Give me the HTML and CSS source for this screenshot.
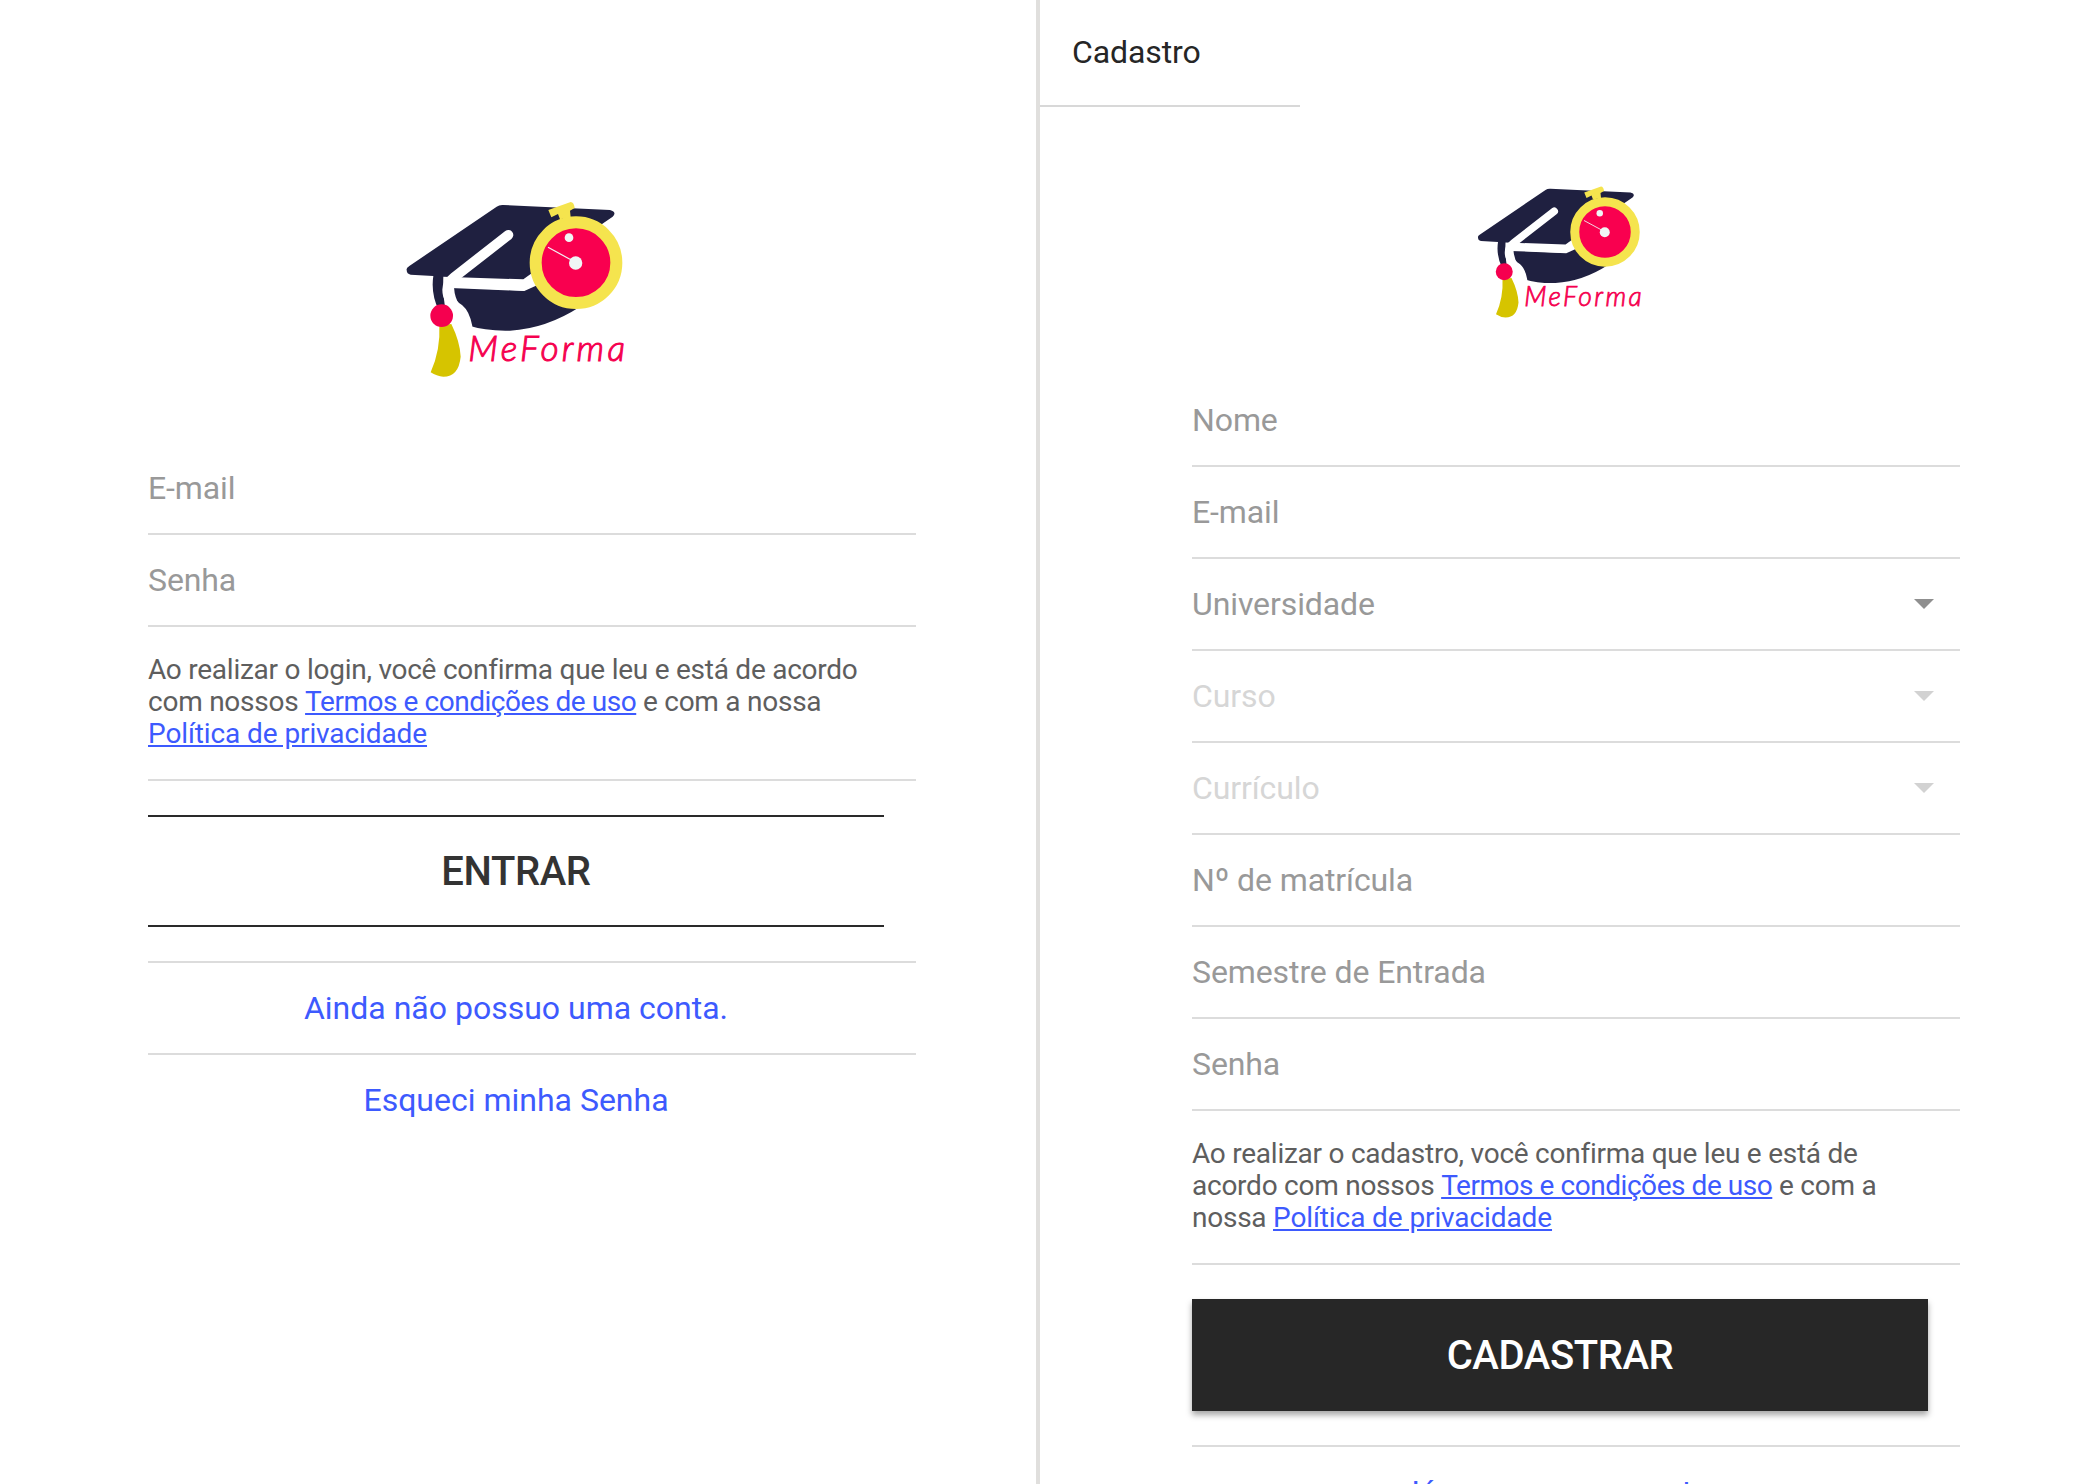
FILE: index.html
```html
<!DOCTYPE html>
<html lang="pt-BR">
<head>
<meta charset="UTF-8">
<title>MeForma</title>
<link rel="stylesheet" href="styles.css">
</head>
<body>

<svg class="defs" width="0" height="0">
  <symbol id="logo" viewBox="0 0 840 660">
    <path fill="#1f2040" d="M80 270 Q78 264 88 258 L350 80 Q358 74 370 75 L690 90 Q712 96 698 110 L560 205 L430 298 L190 290 Q188 340 196 390 L176 390 Q152 340 160 288 L92 284 Q80 282 80 270 Z"/>
    <path fill="#1f2040" d="M222 322 L430 332 L480 305 L600 380 Q500 445 390 452 Q320 454 262 436 Q266 400 240 378 Q224 355 222 322 Z"/>
    <path fill="none" stroke="#fff" stroke-width="30" stroke-linecap="round" stroke-linejoin="round" d="M385 165 L222 292 Q196 312 204 345 Q212 372 238 388 Q255 402 262 440"/>
    <path fill="none" stroke="#fff" stroke-width="30" d="M212 309 L430 318 L480 295"/>
    <path fill="#d6c400" d="M178 436 L214 432 Q240 485 242 530 Q236 590 190 590 Q170 589 152 577 Q182 510 178 436 Z"/>
    <circle cx="185" cy="407" r="34" fill="#f5004f"/>
    <path fill="#f5e44e" d="M505 90 L572 66 Q582 66 584 84 L570 92 L572 112 L540 118 L534 102 L514 112 Z"/>
    <circle cx="588" cy="248" r="121" fill="#f9004f" stroke="#f5e44e" stroke-width="36"/>
    <line x1="504" y1="202" x2="578" y2="242" stroke="#f0f6f6" stroke-width="3.5"/>
    <circle cx="587" cy="249" r="20" fill="#f0f6f6"/>
    <circle cx="567" cy="173" r="13" fill="#f0f6f6"/>
    <text class="logo-text" x="265" y="544" textLength="470" lengthAdjust="spacing">MeForma</text>
  </symbol>
</svg>

<main class="screens">

  <section class="login">
    <svg class="logo logo-big"><use href="#logo"/></svg>
    <div class="field">E-mail</div>
    <div class="field">Senha</div>
    <p class="terms">Ao realizar o login, você confirma que leu e está de acordo com nossos <a class="tight" href="#">Termos e condições de uso</a> e com a nossa <a href="#">Política de privacidade</a></p>
    <button class="btn btn-outline">ENTRAR</button>
    <a class="link-row" href="#">Ainda não possuo uma conta.</a>
    <a class="link-row" href="#">Esqueci minha Senha</a>
  </section>

  <section class="cadastro">
    <header class="topbar">Cadastro</header>
    <div class="form">
      <svg class="logo logo-small"><use href="#logo"/></svg>
      <div class="field">Nome</div>
      <div class="field">E-mail</div>
      <div class="field select">Universidade</div>
      <div class="field select disabled">Curso</div>
      <div class="field select disabled">Currículo</div>
      <div class="field">Nº de matrícula</div>
      <div class="field">Semestre de Entrada</div>
      <div class="field">Senha</div>
      <p class="terms">Ao realizar o cadastro, você confirma que leu e está de acordo com nossos <a class="tight" href="#">Termos e condições de uso</a> e com a nossa <a href="#">Política de privacidade</a></p>
      <button class="btn btn-dark">CADASTRAR</button>
      <a class="link-row" href="#">Já possuo uma conta.</a>
    </div>
  </section>

</main>

</body>
</html>
```

FILE: styles.css
```css
html, body {
  margin: 0;
  height: 100%;
  overflow: hidden;
  background: #fff;
}
body {
  font-family: Roboto, "Liberation Sans", sans-serif;
  color: #555;
}
.defs {
  display: block;
  height: 0;
}
.screens {
  display: flex;
  height: 1484px;
}
.login {
  width: 1036px;
  padding: 180px 0 0 148px;
  box-sizing: border-box;
}
.login > *, .form > * {
  width: 768px;
  box-sizing: border-box;
}
.cadastro {
  flex: 1;
  border-left: 4px solid #e0dfdd;
}
.topbar {
  width: 260px;
  height: 107px;
  box-sizing: border-box;
  padding: 34px 0 0 32px;
  border-bottom: 2px solid #d8d8d8;
  font-size: 32px;
  line-height: 36px;
  letter-spacing: -0.1px;
  color: #262626;
}
.form {
  padding: 63px 0 0 152px;
}
.logo {
  display: block;
}
.login > .logo-big {
  width: 280px;
  height: 220px;
  margin: 0 0 43px 232px;
}
.form > .logo-small {
  width: 210px;
  height: 165px;
  margin: 0 0 40px 266px;
}
.logo-text {
  font-family: Lato, sans-serif;
  font-style: italic;
  font-weight: 300;
  font-size: 106px;
  fill: #f5004f;
  stroke: #f5004f;
  stroke-width: 3;
}
.field {
  display: flex;
  align-items: center;
  height: 92px;
  border-bottom: 2px solid #dcdcdc;
  font-size: 32px;
  letter-spacing: -0.1px;
  color: #999;
}
.select {
  position: relative;
}
.select::after {
  content: "";
  position: absolute;
  right: 26px;
  top: 40px;
  border-top: 10px solid #8f8f8f;
  border-left: 10px solid transparent;
  border-right: 10px solid transparent;
}
.disabled {
  color: #d6d6d6;
}
.disabled::after {
  border-top-color: #d2d2d2;
}
.terms {
  margin: 0;
  padding: 27px 32px 29px 0;
  border-bottom: 2px solid #dcdcdc;
  font-size: 28px;
  line-height: 32px;
  letter-spacing: -0.25px;
  color: #5e5e5e;
}
.terms a {
  color: #3d5afe;
  letter-spacing: -0.1px;
}
.terms a.tight {
  letter-spacing: -0.45px;
}
.btn {
  display: block;
  height: 112px;
  margin: 34px 0;
  font-family: inherit;
  font-size: 40px;
  font-weight: 500;
  letter-spacing: -0.4px;
  cursor: pointer;
}
.login > .btn, .form > .btn {
  width: 736px;
}
.btn-outline {
  background: #fff;
  color: #333;
  border: 0;
  border-top: 2px solid #2a2a2a;
  border-bottom: 2px solid #2a2a2a;
}
.btn-dark {
  background: #272727;
  color: #fff;
  border: 0;
  box-shadow: 0 4px 6px rgba(0, 0, 0, 0.35);
}
.link-row {
  display: block;
  height: 92px;
  border-top: 2px solid #dcdcdc;
  padding-right: 32px;
  font-size: 32px;
  line-height: 90px;
  text-align: center;
  text-decoration: none;
  color: #3d5afe;
}
```
